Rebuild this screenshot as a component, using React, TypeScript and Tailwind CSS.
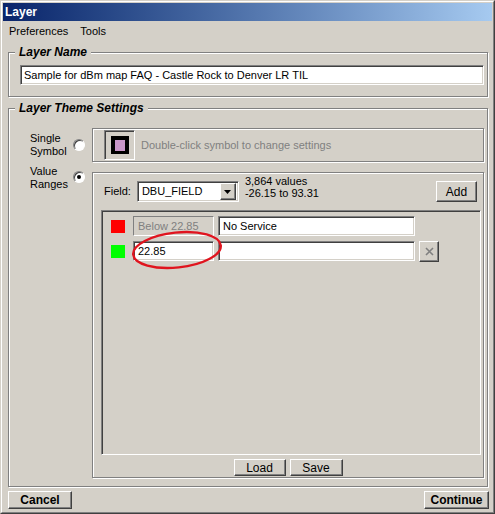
const etched = "border border-[#808080] shadow-[1px_1px_0_#fff,inset_1px_1px_0_#fff]";
const raised =
  "border border-t-white border-l-white border-r-[#404040] border-b-[#404040] shadow-[inset_-1px_-1px_0_#808080] bg-[#D4D0C8]";
const sunken =
  "border border-t-[#808080] border-l-[#808080] border-r-white border-b-white shadow-[inset_1px_1px_0_#404040,inset_-1px_-1px_0_#D4D0C8]";

function GroupBox({ title, className, children }: { title: string; className: string; children: React.ReactNode }) {
  return (
    <div className={`relative ${etched} ${className}`}>
      <span className="absolute left-[6px] -top-[8px] px-[4px] bg-[#D4D0C8] text-[12px] leading-[15px] font-bold italic">
        {title}
      </span>
      {children}
    </div>
  );
}

function Radio({ checked, className }: { checked?: boolean; className: string }) {
  return (
    <div
      className={`w-[12px] h-[12px] rounded-full bg-white border border-t-[#808080] border-l-[#808080] border-r-white border-b-white shadow-[inset_1px_1px_0_#404040] flex items-center justify-center ${className}`}
    >
      {checked && <div className="w-[4px] h-[4px] rounded-full bg-black" />}
    </div>
  );
}

function Button({ label, className, bold }: { label: string; className: string; bold?: boolean }) {
  return (
    <div className={`${raised} flex items-center justify-center text-[12px] ${bold ? "font-bold" : ""} ${className}`}>
      {label}
    </div>
  );
}

function RangeRow({ color, from, label, disabled, remove, className }: {
  color: string;
  from: string;
  label: string;
  disabled?: boolean;
  remove?: boolean;
  className?: string;
}) {
  return (
    <div className={`flex items-center h-[20px] ${className ?? ""}`}>
      <div className="w-[14px] h-[13px]" style={{ background: color }} />
      <div
        className={`ml-[8px] w-[81px] h-[20px] flex items-center pl-[4px] ${
          disabled
            ? "border border-t-[#808080] border-l-[#808080] border-r-white border-b-white text-[#808080]"
            : `${sunken} bg-white`
        }`}
      >
        {from}
      </div>
      <div className={`ml-[4px] w-[197px] h-[20px] flex items-center pl-[4px] bg-white ${sunken}`}>{label}</div>
      {remove && (
        <div className={`ml-[4px] w-[20px] h-[21px] ${raised} flex items-center justify-center`}>
          <svg width="9" height="9" viewBox="0 0 9 9">
            <path d="M1 1 L8 8 M8 1 L1 8" stroke="#808080" strokeWidth="1.6" />
          </svg>
        </div>
      )}
    </div>
  );
}

export default function App() {
  return (
    <div className="w-[495px] h-[514px] bg-[#D4D0C8] border border-t-[#D4D0C8] border-l-[#D4D0C8] border-r-[#404040] border-b-[#404040] font-['Liberation_Sans',Arial,sans-serif] text-[11px] text-black select-none">
      <div className="h-full border border-t-white border-l-white border-r-[#808080] border-b-[#808080] p-px flex flex-col">
        <div className="h-[18px] shrink-0 bg-gradient-to-r from-[#0A246A] to-[#A6CAF0] flex items-center pl-[2px] text-white text-[12px] font-bold">
          Layer
        </div>

        <div className="h-[20px] shrink-0 flex items-center">
          <span className="px-[6px]">Preferences</span>
          <span className="px-[6px]">Tools</span>
        </div>

        <GroupBox title="Layer Name" className="mt-[11px] ml-[5px] mr-[4px] h-[45px] shrink-0 pl-[11px] pt-[12px] pr-[3px]">
          <div className={`h-[20px] w-full bg-white ${sunken} flex items-center pl-[3px]`}>
            Sample for dBm map FAQ - Castle Rock to Denver LR TIL
          </div>
        </GroupBox>

        <GroupBox title="Layer Theme Settings" className="mt-[11px] ml-[5px] mr-[4px] h-[379px] shrink-0 pt-[19px]">
          <div className="flex h-[34px]">
            <div className="w-[43px] ml-[21px] self-center leading-[13px]">
              Single
              <br />
              Symbol
            </div>
            <Radio className="self-center" />
            <div className={`ml-[7px] w-[392px] h-[34px] ${etched} flex items-center`}>
              <div className={`ml-[11px] w-[31px] h-[30px] ${sunken} flex items-center justify-center`}>
                <div className="w-[18px] h-[18px] bg-black flex items-center justify-center">
                  <div className="w-[10px] h-[11px] bg-[#C896C8]" />
                </div>
              </div>
              <span className="ml-[6px] text-[#808080]">Double-click symbol to change settings</span>
            </div>
          </div>

          <div className="flex mt-[3px]">
            <div className="w-[43px] ml-[21px] leading-[13px]">
              Value
              <br />
              Ranges
            </div>
            <Radio checked className="mt-[6px]" />
            <div className={`ml-[7px] mt-[7px] w-[392px] h-[306px] ${etched} flex flex-col`}>
              <div className="flex items-start mt-[8px] pl-[11px] pr-[6px] h-[21px]">
                <span className="leading-[21px]">Field:</span>
                <div className={`ml-[6px] w-[102px] h-[21px] bg-white ${sunken} flex items-center p-[2px]`}>
                  <span className="flex-1 pl-[2px]">DBU_FIELD</span>
                  <div className={`w-[16px] h-[17px] ${raised} flex items-center justify-center`}>
                    <svg width="7" height="4" viewBox="0 0 7 4">
                      <path d="M0 0 H7 L3.5 4 Z" fill="#000" />
                    </svg>
                  </div>
                </div>
                <div className="ml-[6px] -mt-[6px] leading-[12px]">
                  3,864 values
                  <br />
                  -26.15 to 93.31
                </div>
                <Button label="Add" className="ml-auto w-[41px] h-[21px]" />
              </div>

              <div className={`relative mt-[8px] ml-[8px] w-[380px] h-[245px] ${sunken} pt-[5px] pl-[9px]`}>
                <RangeRow color="#FF0000" from="Below 22.85" label="No Service" disabled />
                <RangeRow color="#00FF00" from="22.85" label="" remove className="mt-[5px]" />
                <svg className="absolute left-[28px] top-[18px]" width="94" height="42" viewBox="0 0 94 42">
                  <ellipse cx="47" cy="21" rx="44" ry="17.5" fill="none" stroke="#E0141E" strokeWidth="2.4" transform="rotate(-6 47 21)" />
                </svg>
              </div>

              <div className="mt-[4px] flex justify-center gap-[4px]">
                <Button label="Load" className="w-[52px] h-[17px]" />
                <Button label="Save" className="w-[53px] h-[17px]" />
              </div>
            </div>
          </div>
        </GroupBox>

        <div className="mt-[4px] flex justify-between ml-[5px] mr-[3px]">
          <Button label="Cancel" bold className="w-[64px] h-[18px]" />
          <Button label="Continue" bold className="w-[65px] h-[18px]" />
        </div>
      </div>
    </div>
  );
}
